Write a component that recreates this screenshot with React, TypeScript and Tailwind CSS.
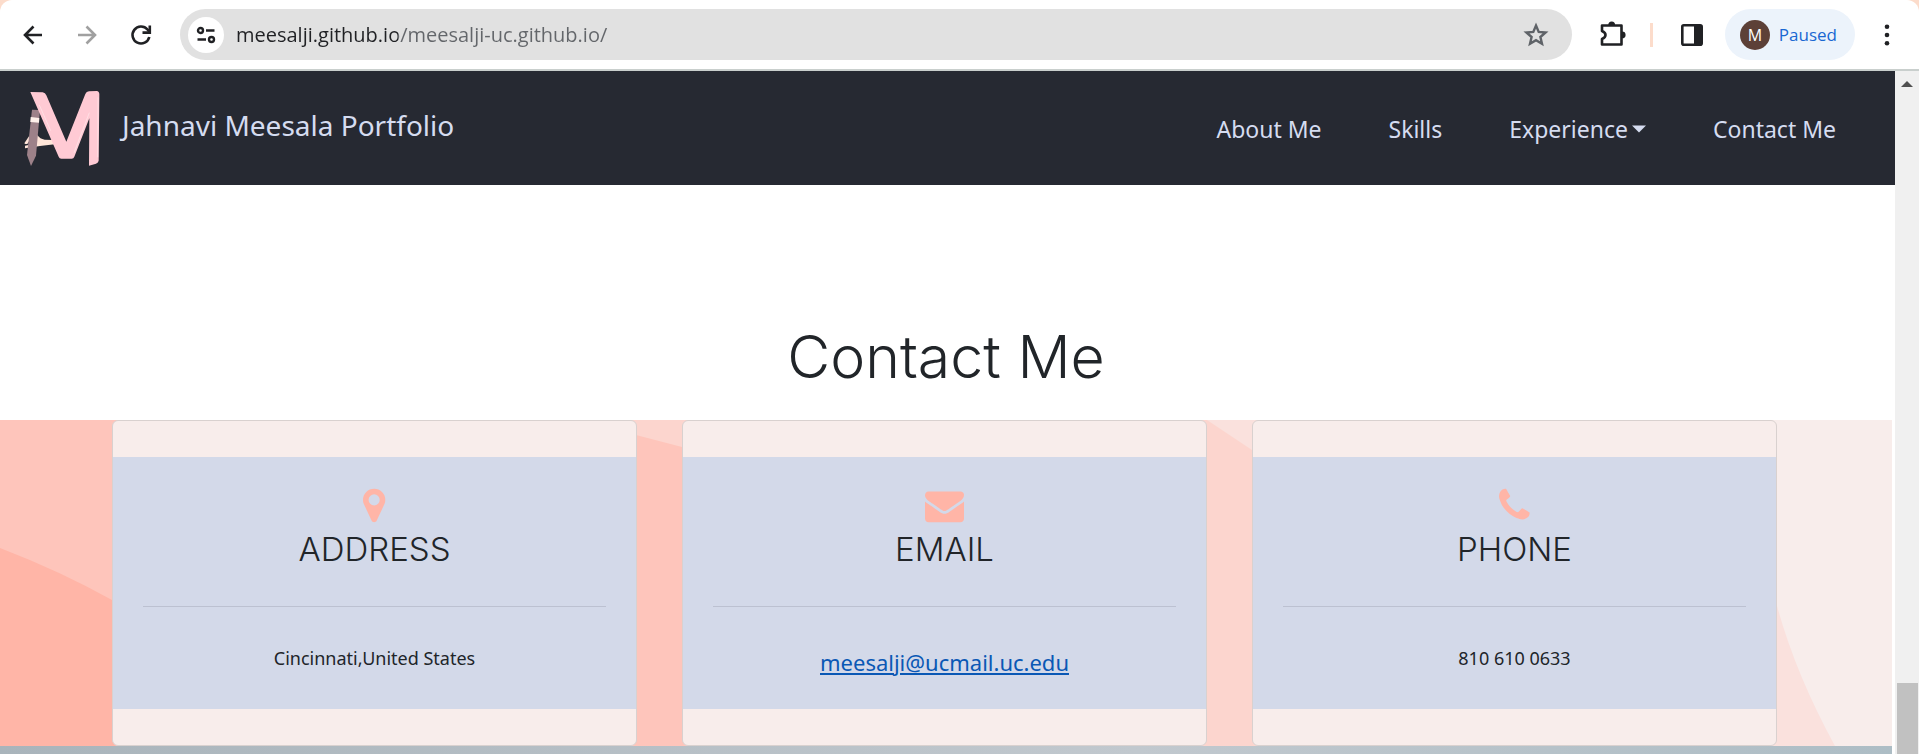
import type { ReactNode } from "react";

const MARKER =
  "M768 896q0 106 -75 181t-181 75t-181 -75t-75 -181t75 -181t181 -75t181 75t75 181zM1024 896q0 -109 -33 -179l-364 -774q-16 -33 -47.5 -52t-67.5 -19t-67.5 19t-46.5 52l-365 774q-33 70 -33 179q0 212 150 362t362 150t362 -150t150 -362z";
const ENVELOPE =
  "M1792 826v-794q0 -66 -47 -113t-113 -47h-1472q-66 0 -113 47t-47 113v794q44 -49 101 -87q362 -246 497 -345q57 -42 92.5 -65.5t94.5 -48t110 -24.5h1h1q51 0 110 24.5t94.5 48t92.5 65.5q170 123 498 345q57 39 100 87zM1792 1120q0 -79 -49 -151t-122 -123q-376 -261 -468 -325q-10 -7 -42.5 -30.5t-54 -38t-52 -32.5t-57.5 -27t-50 -9h-1h-1q-23 0 -50 9t-57.5 27t-52 32.5t-54 38t-42.5 30.5q-91 64 -262 182.5t-205 142.5q-62 42 -117 115.5t-55 136.5q0 78 41.5 130t118.5 52h1472q65 0 112.5 -47t47.5 -113z";
const PHONE =
  "M1408 296q0 -27 -10 -70.5t-21 -68.5q-21 -50 -122 -106q-94 -51 -186 -51q-27 0 -53 3.5t-57.5 12.5t-47 14.5t-55.5 20.5t-49 18q-98 35 -175 83q-127 79 -264 216t-216 264q-48 77 -83 175q-3 9 -18 49t-20.5 55.5t-14.5 47t-12.5 57.5t-3.5 53q0 92 51 186q56 101 106 122q25 11 68.5 21t70.5 10q14 0 21 -3q18 -6 53 -76q11 -19 30 -54t35 -63.5t31 -53.5q3 -4 17.5 -25t21.5 -35.5t7 -28.5q0 -20 -28.5 -50t-62 -55t-62 -53t-28.5 -46q0 -9 5 -22.5t8.5 -20.5t14 -24t11.5 -19q76 -137 174 -235t235 -174q2 -1 19 -11.5t24 -14t20.5 -8.5t22.5 -5q18 0 46 28.5t53 62t55 62t50 28.5q14 0 28.5 -7t35.5 -21.5t25 -17.5q25 -15 53.5 -31t63.5 -35t54 -30q70 -35 76 -53q3 -7 3 -21z";

function CardIcon({ path, width }: { path: string; width: number }) {
  return (
    <svg viewBox={`0 0 ${width} 1792`} className="mx-auto h-[39px] fill-[#ffb5a7]" aria-hidden="true">
      <path d={path} transform="translate(0 1536) scale(1 -1)" />
    </svg>
  );
}

function Logo() {
  return (
    <svg viewBox="72 60 228 231" className="h-[77px] w-[76px]" aria-hidden="true">
      <path d="M73 220L82 206L87 199L92 206L82 222L76 222Z" fill="#ffe5d9" />
      <path d="M75 227L104 221L108 205L112 195Q120 207 134 209L160 210L164 223L120 228L75 235Z" fill="#ffe5d9" />
      <path d="M96 119L120 120L108 257L93 288L81 255Z" fill="#9d8189" />
      <path d="M92 141L118 144L117 158L91 156Z" fill="#fff0ea" />
      <path
        d="M91 66L128 67Q136 69 139 76L199 215L256 72Q259 65 267 64L290 63Q298 64 298 73L296 272Q295 278 288 281L267 287L268 145L223 260Q221 266 215 266L184 266Q178 266 176 260Z"
        fill="#ffcad4"
      />
      <path d="M118 105L152 182M268 128L222 248M294 82L293 262" stroke="#ffdfe4" strokeWidth="3" fill="none" />
    </svg>
  );
}

function Toolbar() {
  return (
    <header className="bg-[#fcdccb] font-['Open_Sans',sans-serif]">
      <div className="flex items-center rounded-t-xl border-b-2 border-[#c9cfcd] bg-white pt-[9px] pb-[9px] pl-5">
        <div className="flex shrink-0 items-center gap-[28px]">
          <button type="button" aria-label="Back">
            <svg viewBox="0 0 26 26" className="size-[26px]" fill="none" stroke="#202124" strokeWidth="2.6">
              <path d="M22 13H6M13.500 4.500L5 13L13.500 21.500" />
            </svg>
          </button>
          <button type="button" aria-label="Forward">
            <svg viewBox="0 0 26 26" className="size-[26px]" fill="none" stroke="#a0a0a0" strokeWidth="2.6">
              <path d="M4 13H20M12.500 4.500L21 13L12.500 21.500" />
            </svg>
          </button>
          <button type="button" aria-label="Reload">
            <svg viewBox="0 0 26 26" className="size-[26px]" fill="none" stroke="#202124" strokeWidth="2.6">
              <path d="M21.300 15A8.500 8.500 0 1 1 19.500 7.500L21.500 10" />
              <path d="M21.800 3.500V10.600H14.500" />
            </svg>
          </button>
        </div>
        <div className="ml-[26px] flex h-[51px] flex-1 items-center rounded-full bg-[#e1e1e1] pr-[22px] pl-2">
          <button type="button" aria-label="Site information" className="grid size-9 place-items-center rounded-full bg-white">
            <svg viewBox="0 0 20 18" className="h-[18px] w-5" fill="none" stroke="#202124" strokeWidth="2.4">
              <circle cx="4.500" cy="4.500" r="2.500" />
              <path d="M10 4.500H18.500M1.500 13.500H10" />
              <circle cx="15.500" cy="13.500" r="2.500" />
            </svg>
          </button>
          <input
            type="text"
            aria-label="Address bar"
            defaultValue="meesalji.github.io/meesalji-uc.github.io/"
            className="ml-3 h-9 min-w-0 flex-1 bg-linear-to-r from-[#202124] from-[162px] to-[#63666a] to-[162px] bg-clip-text text-[20px] text-transparent outline-none"
          />
          <button type="button" aria-label="Bookmark this page">
            <svg viewBox="0 0 28 28" className="size-7" fill="none" stroke="#5f6368" strokeWidth="2.4">
              <path d="M14 4.500L16.700 10.900L23.600 11.500L18.400 16L20 22.800L14 19.200L8 22.800L9.600 16L4.400 11.500L11.300 10.900Z" />
            </svg>
          </button>
        </div>
        <div className="flex shrink-0 items-center">
          <button type="button" aria-label="Extensions" className="ml-[26px]">
            <svg viewBox="0 0 30 30" className="size-[30px]" fill="none" stroke="#202124" strokeWidth="2.6" strokeLinejoin="round">
              <path d="M4 5.500H23.500V24.500H4V19Q7.500 17.500 7.500 15T4 11Z" />
              <path d="M10.300 5A3.400 3.600 0 0 1 17.100 5ZM24 11.500A3.600 3.400 0 0 1 24 18.300Z" fill="#202124" stroke="none" />
            </svg>
          </button>
          <div className="ml-[22px] h-6 w-[3px] bg-[#fcdccb]" />
          <button type="button" aria-label="Side panel" className="ml-7">
            <svg viewBox="0 0 22 22" className="size-[22px]">
              <rect x="1.300" y="1.300" width="19.400" height="19.400" rx="1.500" fill="none" stroke="#202124" strokeWidth="2.600" />
              <path d="M13 1H21V21H13Z" fill="#202124" />
            </svg>
          </button>
          <button type="button" className="ml-[22px] flex h-[51px] items-center gap-[9px] rounded-full bg-[#ecf3fb] pr-[18px] pl-[15px] text-[17px] text-[#1967d2]">
            <span className="grid size-[30px] place-items-center rounded-full bg-[#5d4037] text-[16px] text-white">M</span>
            Paused
          </button>
          <button type="button" aria-label="Menu" className="mr-5 ml-5">
            <svg viewBox="0 0 24 24" className="size-6" fill="#202124">
              <circle cx="12" cy="3.800" r="2.300" />
              <circle cx="12" cy="12" r="2.300" />
              <circle cx="12" cy="20.200" r="2.300" />
            </svg>
          </button>
        </div>
      </div>
    </header>
  );
}

function SiteNav() {
  return (
    <nav className="flex h-[114px] items-center justify-between bg-[#262932] pr-[59px] pl-6 text-[#d5dcf0]">
      <a href="#home" className="flex items-center gap-[22px] text-[28px]">
        <Logo />
        <span className="pb-[6px]">Jahnavi Meesala Portfolio</span>
      </a>
      <ul className="flex gap-[67px] pt-[2px] text-[23px]">
        <li><a href="#about">About Me</a></li>
        <li><a href="#skills">Skills</a></li>
        <li>
          <button type="button" className="flex items-center gap-1">
            Experience
            <svg viewBox="0 0 14 8" className="h-2 w-[14px] fill-[#d5dcf0]" aria-hidden="true">
              <path d="M0 0.500H14L7 7.500Z" />
            </svg>
          </button>
        </li>
        <li><a href="#contact">Contact Me</a></li>
      </ul>
    </nav>
  );
}

function ContactCard({ icon, title, children }: { icon: ReactNode; title: string; children: ReactNode }) {
  return (
    <article className="flex flex-col rounded-md border border-[#d9d1cf] bg-[#f8edeb] py-9">
      <div className="h-[252px] bg-[#d3d9e9] px-[30px] pt-[29px] text-center">
        {icon}
        <h4 className="font-[Inter,sans-serif] text-[33px] leading-[49px] font-light">{title}</h4>
        <hr className="mt-8 border-[#bcc1d1]" />
        <div className="flex h-[102px] items-center justify-center">{children}</div>
      </div>
    </article>
  );
}

function Waves() {
  return (
    <svg viewBox="0 0 1892 326" preserveAspectRatio="none" className="absolute inset-0 size-full" aria-hidden="true">
      <path d="M0 0H1600Q1735 40 1777 186Q1796 255 1835 326H0Z" fill="#fae1dd" />
      <path d="M0 0H1207L1252 30Q1440 170 1500 326H0Z" fill="#fcd5ce" />
      <path d="M0 0H540L636 15L682 27Q980 130 1100 326H0Z" fill="#fec5bb" />
      <path d="M0 128Q60 151 112 180Q250 250 330 326H0Z" fill="#ffb5a7" />
    </svg>
  );
}

function Scrollbar() {
  return (
    <div className="flex w-6 shrink-0 flex-col items-center justify-between bg-[#f0f0f0] pt-[10px]" aria-hidden="true">
      <svg viewBox="0 0 12 6" className="h-[6px] w-3 fill-[#505050]">
        <path d="M6 0L12 6H0Z" />
      </svg>
      <div className="h-[71px] w-[21px] bg-[#c1c1c1]" />
    </div>
  );
}

export default function App() {
  return (
    <div className="flex min-h-screen flex-col bg-white font-['Noto_Sans',sans-serif] text-[#212529]">
      <Toolbar />
      <div className="flex flex-1">
        <main className="flex min-w-0 flex-1 flex-col">
          <SiteNav />
          <section id="contact" className="flex flex-1 flex-col pr-[3px]">
            <h2 className="pt-[134px] pb-[25px] text-center font-[Inter,sans-serif] text-[59px] leading-[76px] font-light">
              Contact Me
            </h2>
            <div className="relative bg-[#f8edeb]">
              <Waves />
              <div className="relative grid grid-cols-3 gap-[45px] pr-[115px] pl-28">
                <ContactCard title="ADDRESS" icon={<CardIcon path={MARKER} width={1024} />}>
                  <p className="text-[18px]">Cincinnati,United States</p>
                </ContactCard>
                <ContactCard title="EMAIL" icon={<CardIcon path={ENVELOPE} width={1792} />}>
                  <a href="mailto:meesalji@ucmail.uc.edu" className="pt-2 text-[22px] text-[#0a58b5] underline decoration-2 underline-offset-2">
                    meesalji@ucmail.uc.edu
                  </a>
                </ContactCard>
                <ContactCard title="PHONE" icon={<CardIcon path={PHONE} width={1408} />}>
                  <p className="text-[18px]">810 610 0633</p>
                </ContactCard>
              </div>
            </div>
            <footer className="min-h-2 flex-1 bg-linear-to-r from-[#a9b4bb] via-[#c1c8ce] via-60% to-[#adbdc5]" />
          </section>
        </main>
        <Scrollbar />
      </div>
    </div>
  );
}
